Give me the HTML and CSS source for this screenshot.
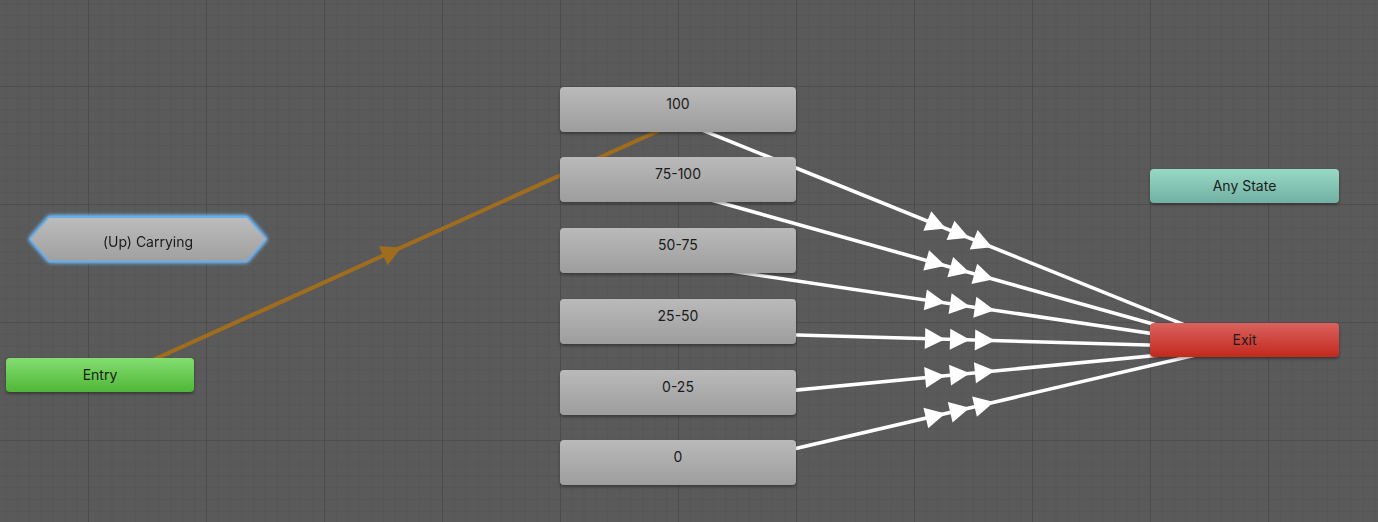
FILE: index.html
```html
<!DOCTYPE html>
<html lang="en">
<head>
  <meta charset="UTF-8">
  <title>Animator</title>
  <link rel="stylesheet" href="styles.css">
</head>
<body>
  <main class="graph">
    <svg class="wires" width="1378" height="522" viewBox="0 0 1378 522">
      <defs>
        <pattern id="minor" x="88" y="86" width="11.8" height="11.8" patternUnits="userSpaceOnUse">
          <path d="M0 0 H11.8 M0 0 V11.8" stroke="#525252" stroke-width="1" fill="none"/>
        </pattern>
        <pattern id="major" x="88" y="86" width="118" height="118" patternUnits="userSpaceOnUse">
          <path d="M0 0 H118 M0 0 V118" stroke="#454545" stroke-width="1.2" fill="none"/>
        </pattern>
        <polygon id="tri" points="13,0 -7,-10.5 -7,10.5"/>
      </defs>
      <rect width="1378" height="522" fill="#5a5a5a"/>
      <rect width="1378" height="522" fill="url(#minor)"/>
      <rect width="1378" height="522" fill="url(#major)"/>

      <!-- entry -> 100 -->
      <line x1="100" y1="384" x2="678" y2="122" stroke="#a06d1e" stroke-width="4"/>
      <g transform="translate(389.6 252.9) rotate(-24.23)" fill="#a06d1e">
        <use href="#tri"/>
      </g>

      <!-- states -> exit -->
      <g stroke="#fff" stroke-width="3.6">
        <line x1="678" y1="120.4" x2="1244" y2="348.9"/>
        <line x1="678" y1="190.7" x2="1244" y2="349.6"/>
        <line x1="678" y1="263.3" x2="1244" y2="347.2"/>
        <line x1="678" y1="331.6" x2="1244" y2="347.7"/>
        <line x1="678" y1="401.4" x2="1244" y2="347"/>
        <line x1="678" y1="476" x2="1244" y2="343.7"/>
      </g>
      <g fill="#fff">
        <g transform="translate(957 233) rotate(21.98)">
          <use href="#tri" x="-25"/><use href="#tri"/><use href="#tri" x="25"/>
        </g>
        <g transform="translate(957 269) rotate(15.69)">
          <use href="#tri" x="-25"/><use href="#tri"/><use href="#tri" x="25"/>
        </g>
        <g transform="translate(957 304.6) rotate(8.43)">
          <use href="#tri" x="-25"/><use href="#tri"/><use href="#tri" x="25"/>
        </g>
        <g transform="translate(957 339.5) rotate(1.62)">
          <use href="#tri" x="-25"/><use href="#tri"/><use href="#tri" x="25"/>
        </g>
        <g transform="translate(957 374.5) rotate(-5.5)">
          <use href="#tri" x="-25"/><use href="#tri"/><use href="#tri" x="25"/>
        </g>
        <g transform="translate(957 410.7) rotate(-13.17)">
          <use href="#tri" x="-25"/><use href="#tri"/><use href="#tri" x="25"/>
        </g>
      </g>
    </svg>

    <div class="node state" style="left:560px; top:87px">100</div>
    <div class="node state" style="left:560px; top:157px">75-100</div>
    <div class="node state" style="left:560px; top:228px">50-75</div>
    <div class="node state" style="left:560px; top:299px">25-50</div>
    <div class="node state" style="left:560px; top:370px">0-25</div>
    <div class="node state" style="left:560px; top:440px">0</div>

    <div class="machine" style="left:29px; top:216px">
      <div class="machine-edge">
        <div class="machine-body">(Up) Carrying</div>
      </div>
    </div>

    <div class="node special entry" style="left:6px; top:358px">Entry</div>
    <div class="node special any" style="left:1150px; top:169px">Any State</div>
    <div class="node special exit" style="left:1150px; top:323px">Exit</div>
  </main>
</body>
</html>
```

FILE: styles.css
```css
body {
  margin: 0;
  background: #5a5a5a;
  font-family: 'Inter', 'Noto Sans', sans-serif;
  font-size: 14px;
  color: #1b1b1b;
}

.graph {
  position: relative;
  width: 1378px;
  height: 522px;
  overflow: hidden;
}

.wires {
  position: absolute;
  left: 0;
  top: 0;
}

.node {
  position: absolute;
  box-sizing: border-box;
  border-radius: 4px;
  text-align: center;
  box-shadow: 0 2px 3px rgba(0, 0, 0, 0.35);
}

.state {
  width: 236px;
  height: 45px;
  padding-top: 8px;
  line-height: 17px;
  background: linear-gradient(#bababa, #9d9d9d);
}

.special {
  width: 189px;
  height: 34px;
  line-height: 34px;
}

.entry {
  width: 188px;
  background: linear-gradient(#84dd70, #4fb737);
}

.any {
  background: linear-gradient(#98d9c5, #71b0a2);
}

.exit {
  background: linear-gradient(#da625e, #c3281e);
}

.machine {
  position: absolute;
  width: 238px;
  height: 46px;
  filter: drop-shadow(0 0 2px #6fb6f2) drop-shadow(0 0 1px #6fb6f2);
}

.machine-edge {
  height: 100%;
  padding: 1.5px;
  box-sizing: border-box;
  background: #6aaee8;
  clip-path: polygon(20px 0, calc(100% - 20px) 0, 100% 50%, calc(100% - 20px) 100%, 20px 100%, 0 50%);
}

.machine-body {
  height: 100%;
  line-height: 47px;
  text-align: center;
  background: linear-gradient(#bcbcbc, #a0a0a0);
  clip-path: polygon(19px 0, calc(100% - 19px) 0, 100% 50%, calc(100% - 19px) 100%, 19px 100%, 0 50%);
}
```
